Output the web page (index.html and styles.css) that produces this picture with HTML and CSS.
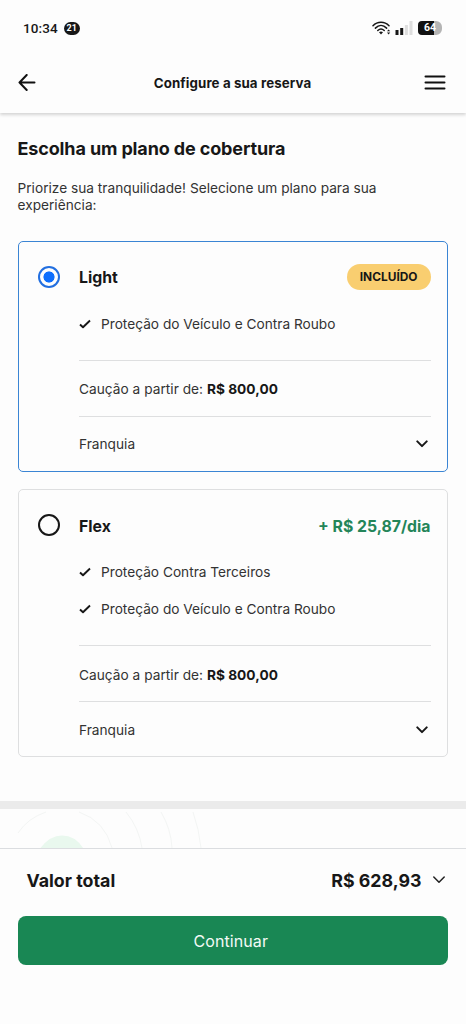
FILE: index.html
```html
<!DOCTYPE html>
<html lang="pt-BR">
<head>
<meta charset="utf-8">
<title>Configure a sua reserva</title>
<link rel="stylesheet" href="styles.css">
</head>
<body>
<div class="app">
  <div class="status">
    <span class="time">10:34</span>
    <span class="notif">21</span>
    <span class="spacer"></span>
    <svg class="wifi" width="19" height="14" viewBox="0 0 19 14" fill="none" stroke="#171717" stroke-width="1.5" stroke-linecap="round">
      <path d="M1 4.700C5.500 0 12.500 0 17 4.700M3.400 7.100C6.800 3.700 11.200 3.700 14.600 7.100M5.800 9.500C7.900 7.500 10.100 7.500 12.200 9.500"/>
      <path d="M7 11.200Q9 9.900 11 11.200L9 13.500Z" fill="#171717" stroke="none"/>
      <path d="M15 10.300L16.600 8.400L18.200 10.300ZM15 11.500L16.600 13.400L18.200 11.500Z" fill="#171717" stroke="none"/>
    </svg>
    <svg class="signal" width="18" height="14" viewBox="0 0 18 14">
      <path d="M.5 9h3v5h-3zM5.200 7h3v7h-3z" fill="#171717"/>
      <path d="M9.900 4h3v10h-3zM14.500 0h3v14h-3z" fill="#dedede"/>
    </svg>
    <span class="battery"><span class="level">64</span></span>
  </div>
  <header class="header">
    <svg width="18" height="18" viewBox="0 0 18 18" fill="none" stroke="#111" stroke-width="2" stroke-linecap="round" stroke-linejoin="round"><path d="M16.500 8.500H1.500M8.700 1L1.500 8.500L8.700 16"/></svg>
    <h1>Configure a sua reserva</h1>
    <svg width="22" height="16" viewBox="0 0 22 16" stroke="#111" stroke-width="2" stroke-linecap="round"><path d="M1.500 1.500H20.500M1.500 7.500H20.500M1.500 13.500H20.500"/></svg>
  </header>
  <main class="content">
    <h2>Escolha um plano de cobertura</h2>
    <p class="intro">Priorize sua tranquilidade! Selecione um plano para sua experiência:</p>
    <section class="card selected">
      <span class="radio"></span>
      <div class="plan">
        <div class="head"><h3>Light</h3><span class="badge">INCLUÍDO</span></div>
        <ul>
          <li><svg class="check" viewBox="0 0 12 10"><path d="M1 5.500L4 8.300L11 1.500"/></svg>Proteção do Veículo e Contra Roubo</li>
        </ul>
        <div class="row deposit">Caução a partir de:&nbsp;<b>R$ 800,00</b></div>
        <div class="row">Franquia<svg class="chev" viewBox="0 0 12 8"><path d="M1.300 1.400L6 6.100L10.700 1.400"/></svg></div>
      </div>
    </section>
    <section class="card option">
      <span class="radio"></span>
      <div class="plan">
        <div class="head"><h3>Flex</h3><span class="price">+ R$ 25,87/dia</span></div>
        <ul>
          <li><svg class="check" viewBox="0 0 12 10"><path d="M1 5.500L4 8.300L11 1.500"/></svg>Proteção Contra Terceiros</li>
          <li><svg class="check" viewBox="0 0 12 10"><path d="M1 5.500L4 8.300L11 1.500"/></svg>Proteção do Veículo e Contra Roubo</li>
        </ul>
        <div class="row deposit">Caução a partir de:&nbsp;<b>R$ 800,00</b></div>
        <div class="row">Franquia<svg class="chev" viewBox="0 0 12 8"><path d="M1.300 1.400L6 6.100L10.700 1.400"/></svg></div>
      </div>
    </section>
  </main>
  <div class="next">
    <svg width="220" height="39" viewBox="0 0 220 39" fill="none" stroke="#f3f5f4">
      <path d="M40.500 39Q50 26.500 62 26.500Q75 26.500 83 39Z" fill="#e9f8ee" stroke="none"/>
      <path d="M18 24Q28 9 46 3M79 3Q105 12 112 39M126 3Q139 19 142 39M161 3Q171 20 172 39M193 3Q199 20 201 39"/>
    </svg>
  </div>
  <footer class="footer">
    <div class="total"><span class="label">Valor total</span><span>R$ 628,93</span><svg width="14" height="9" viewBox="0 0 14 9" fill="none" stroke="#222" stroke-width="1.500" stroke-linecap="round" stroke-linejoin="round"><path d="M1.800 1L7 6.300L12.200 1"/></svg></div>
    <button class="cta">Continuar</button>
  </footer>
</div>
</body>
</html>
```
FILE: styles.css
```css
* { box-sizing: border-box; }
body { margin: 0; background: #fdfdfd; color: #171717; font-family: Inter, sans-serif; }
h1, h2, h3, p, ul { margin: 0; padding: 0; }
svg { display: block; flex: none; }
.app { height: 1024px; display: flex; flex-direction: column; overflow: hidden; }
.status { height: 56px; padding: 0 24px 0 23px; display: flex; align-items: center; }
.time { font: 500 13.500px Roboto, sans-serif; letter-spacing: .1px; }
.notif { width: 16px; height: 13px; margin-left: 6px; border-radius: 7px; background: #171717; color: #fff; font: 700 9px/13px Roboto, sans-serif; text-align: center; }
.spacer { flex: 1; }
.signal { margin: 0 5px 0 4px; }
.battery { width: 24px; height: 14px; border-radius: 4px 6px 6px 4px; background: linear-gradient(90deg, #111 0 16px, #b5b5b5 16px); }
.level { display: block; padding-left: 6px; color: #fff; font: 700 10.500px/14px Roboto, sans-serif; }
.header { height: 57px; flex: none; padding: 0 20px 4px 18px; display: flex; align-items: center; justify-content: space-between; box-shadow: 0 2px 3px rgba(0,0,0,.16); clip-path: inset(0 0 -8px 0); }
.header h1 { padding-left: 5px; font-size: 13.300px; line-height: 18px; font-weight: 700; letter-spacing: .1px; }
.content { padding: 25px 18px 0 17.500px; height: 688px; flex: none; }
h2 { font-size: 18px; line-height: 22px; font-weight: 700; letter-spacing: -.13px; }
.intro { margin: 20px 0 27px; font-size: 13.700px; line-height: 17px; color: #333; }
.card { display: flex; margin-bottom: 17px; border: 1px solid #dedfe0; border-radius: 5px; padding-right: 16.500px; }
.card.selected { border-color: #3b85d4; }
.radio { width: 22px; height: 22px; margin: 24px 19.500px 0 19px; border: 2px solid #171717; border-radius: 50%; flex: none; }
.selected .radio { border-color: #226fe0; background: radial-gradient(circle, #0d6efd 5.200px, transparent 5.900px); }
.plan { flex: 1; }
.head { height: 70px; display: flex; justify-content: space-between; align-items: center; }
h3, .price { font-size: 15.800px; font-weight: 700; }
.price { color: #248559; }
.badge { padding: 0 13px; border-radius: 13px; background: #f9ce70; font-size: 11.900px; line-height: 26px; font-weight: 700; }
ul { list-style: none; display: grid; gap: 13px; margin-bottom: 24px; }
li { display: flex; align-items: center; gap: 10px; height: 24px; font-size: 13.700px; color: #333; }
.check { width: 12px; height: 10px; fill: none; stroke: #171717; stroke-width: 1.900; stroke-linejoin: round; }
.row { height: 56px; border-top: 1px solid #dedfe0; display: flex; align-items: center; font-size: 13.700px; color: #333; }
.row b { color: #171717; }
.deposit { letter-spacing: .02px; }
.row:last-child { height: 55px; justify-content: space-between; }
.option .head, .option .row { padding-top: 2px; }
.option .head + ul { margin-bottom: 24px; }
.chev { width: 12px; height: 8px; margin-right: 3px; fill: none; stroke: #171717; stroke-width: 2; stroke-linecap: round; stroke-linejoin: round; }
.next { height: 47px; flex: none; border-top: 8px solid #ebebeb; }
.footer { flex: 1; padding: 0 18px 0 17.500px; border-top: 1px solid #dbdde0; background: #fdfdfd; }
.total { height: 67px; padding: 0 2px 4px 9px; display: flex; align-items: center; font-size: 17.800px; font-weight: 700; }
.label { margin-right: auto; }
.total svg { margin-left: 10.500px; }
.cta { display: block; width: 100%; height: 49px; border: 0; border-radius: 8px; background: #198754; color: #f3faf6; font: 400 16px Inter, sans-serif; letter-spacing: .1px; padding: 0 4px 0 0; }
```
